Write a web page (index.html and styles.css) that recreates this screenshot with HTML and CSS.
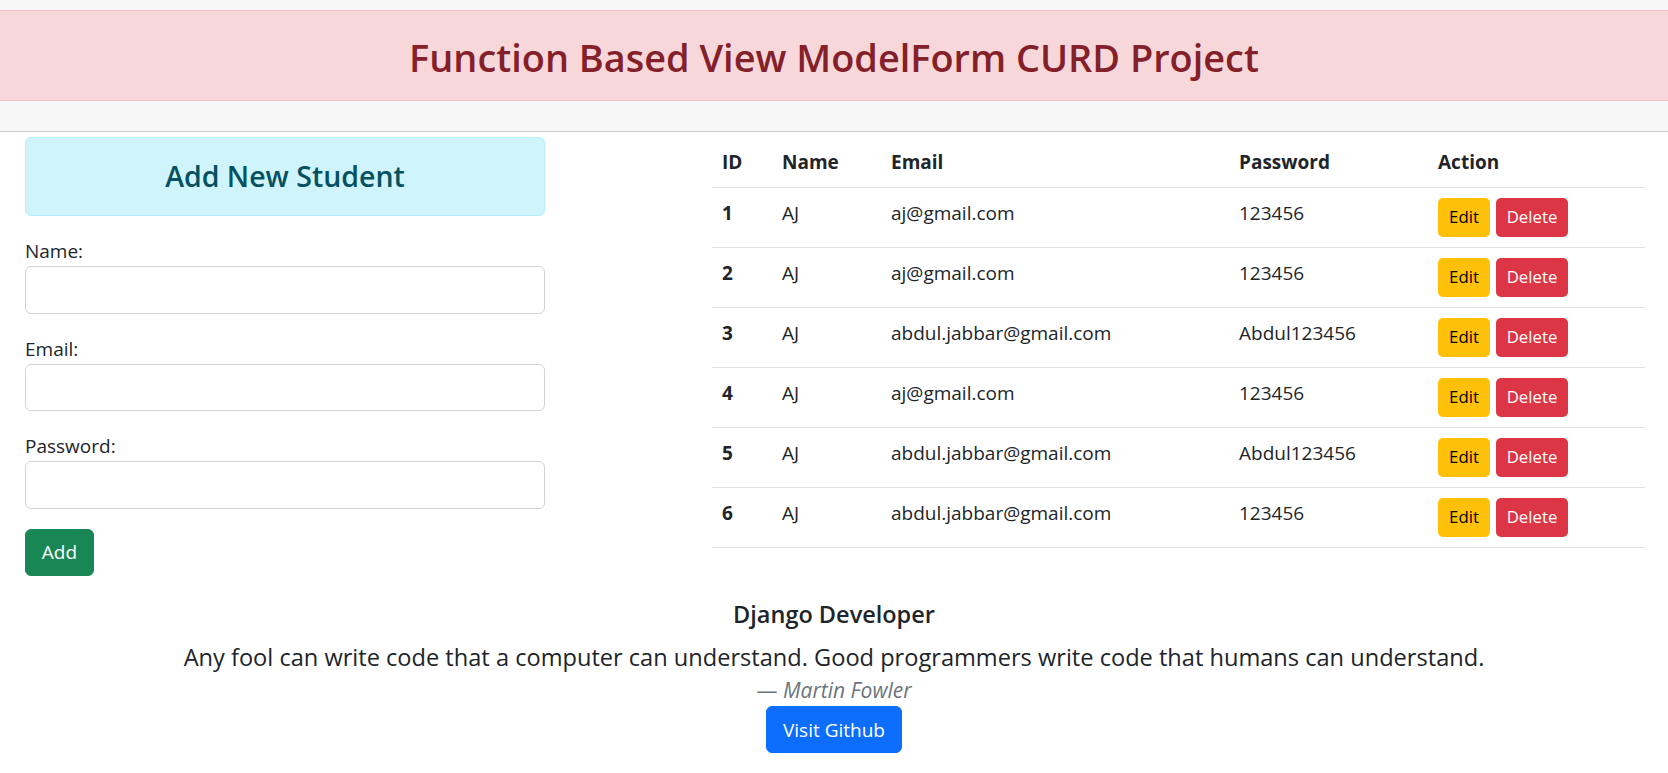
FILE: index.html
```html
<!DOCTYPE html>
<html lang="en">
<head>
<meta charset="utf-8">
<title>Function Based View ModelForm CURD Project</title>
<link rel="stylesheet" href="styles.css">
</head>
<body>
<header class="topbar">
  <div class="alert-danger">
    <h2 class="page-title">Function Based View ModelForm CURD Project</h2>
  </div>
</header>

<main class="content">
  <section class="form-col">
    <div class="alert-info">
      <h4 class="form-title">Add New Student</h4>
    </div>
    <form class="student-form">
      <div class="field">
        <label class="field-label" for="name">Name:</label>
        <input class="field-input" type="text" id="name">
      </div>
      <div class="field">
        <label class="field-label" for="email">Email:</label>
        <input class="field-input" type="email" id="email">
      </div>
      <div class="field">
        <label class="field-label" for="password">Password:</label>
        <input class="field-input" type="password" id="password">
      </div>
      <button type="button" class="btn btn-success">Add</button>
    </form>
  </section>

  <section class="table-col">
    <table class="students">
      <colgroup>
        <col class="c-id"><col class="c-name"><col class="c-email"><col class="c-pass"><col class="c-action">
      </colgroup>
      <thead>
        <tr><th>ID</th><th>Name</th><th>Email</th><th>Password</th><th>Action</th></tr>
      </thead>
      <tbody>
        <tr><th>1</th><td>AJ</td><td>aj@gmail.com</td><td>123456</td><td><div class="actions"><a class="btn-sm btn-warning">Edit</a><a class="btn-sm btn-danger">Delete</a></div></td></tr>
        <tr><th>2</th><td>AJ</td><td>aj@gmail.com</td><td>123456</td><td><div class="actions"><a class="btn-sm btn-warning">Edit</a><a class="btn-sm btn-danger">Delete</a></div></td></tr>
        <tr><th>3</th><td>AJ</td><td>abdul.jabbar@gmail.com</td><td>Abdul123456</td><td><div class="actions"><a class="btn-sm btn-warning">Edit</a><a class="btn-sm btn-danger">Delete</a></div></td></tr>
        <tr><th>4</th><td>AJ</td><td>aj@gmail.com</td><td>123456</td><td><div class="actions"><a class="btn-sm btn-warning">Edit</a><a class="btn-sm btn-danger">Delete</a></div></td></tr>
        <tr><th>5</th><td>AJ</td><td>abdul.jabbar@gmail.com</td><td>Abdul123456</td><td><div class="actions"><a class="btn-sm btn-warning">Edit</a><a class="btn-sm btn-danger">Delete</a></div></td></tr>
        <tr><th>6</th><td>AJ</td><td>abdul.jabbar@gmail.com</td><td>123456</td><td><div class="actions"><a class="btn-sm btn-warning">Edit</a><a class="btn-sm btn-danger">Delete</a></div></td></tr>
      </tbody>
    </table>
  </section>
</main>

<footer class="quote-area">
  <h5 class="quote-heading">Django Developer</h5>
  <blockquote class="quote">Any fool can write code that a computer can understand. Good programmers write code that humans can understand.</blockquote>
  <p class="quote-author"><span class="dash">—</span> <cite>Martin Fowler</cite></p>
  <a class="btn btn-primary">Visit Github</a>
</footer>
</body>
</html>
```
FILE: styles.css
```css
* { box-sizing: border-box; }

body {
  margin: 0;
  font-family: "Open Sans", "Noto Sans", sans-serif;
  font-size: 19px;
  line-height: 30px;
  color: #212529;
  background: #fff;
}

/* ---------- header ---------- */
.topbar {
  background: #f7f7f7;
  padding: 10px 0 30px;
  border-bottom: 1px solid #cccccc;
}
.alert-danger {
  background: #f8d7da;
  border-top: 1px solid #f5c2c7;
  border-bottom: 1px solid #f5c2c7;
  padding: 20px 0;
  color: #842029;
  text-align: center;
}
.page-title {
  margin: 0;
  font-size: 37.9px;
  font-weight: 600;
  line-height: 49px;
  position: relative;
  top: 2px;
}

/* ---------- main ---------- */
.content {
  display: flex;
  align-items: flex-start;
  padding: 5px 23px 0 25px;
  gap: 167px;
}
.form-col { width: 520px; flex: none; }
.table-col { flex: 1; }

.alert-info {
  background: #cff4fc;
  border: 1px solid #b6effb;
  border-radius: 6px;
  padding: 20px 0;
  color: #055160;
  text-align: center;
  margin-bottom: 20px;
}
.form-title {
  margin: 0;
  font-size: 28.5px;
  font-weight: 600;
  line-height: 37px;
}

.student-form { margin: 0; }
.field { margin-bottom: 20px; }
.field-label {
  display: block;
  line-height: 30px;
}
.field-input {
  display: block;
  width: 100%;
  height: 47.5px;
  border: 1px solid #ced4da;
  border-radius: 6px;
  background: #fff;
  font: inherit;
  padding: 0 15px;
}

.btn {
  display: inline-flex;
  align-items: center;
  justify-content: center;
  height: 47.5px;
  padding: 0 15px;
  border-radius: 6px;
  color: #fff;
  font-size: 19px;
  font-family: inherit;
  border: 1px solid transparent;
  text-decoration: none;
  cursor: pointer;
}
.btn-success { background: #198754; border-color: #198754; width: 69px; }
.btn-primary { background: #0d6efd; border-color: #0d6efd; width: 136px; }

/* ---------- table ---------- */
.students {
  width: 100%;
  border-collapse: collapse;
  table-layout: fixed;
}
.c-id { width: 60px; }
.c-name { width: 109px; }
.c-email { width: 348px; }
.c-pass { width: 199px; }
.c-action { width: 217px; }

.students th,
.students td {
  padding: 10px 10px;
  text-align: left;
  vertical-align: top;
  line-height: 30px;
  border-bottom: 1px solid #dee2e6;
  font-weight: 400;
}
.students th { font-weight: 700; }

.actions {
  display: flex;
  gap: 6px;
  height: 39px;
}
.btn-sm {
  display: inline-flex;
  align-items: center;
  justify-content: center;
  height: 39px;
  border-radius: 5px;
  font-size: 16.8px;
  line-height: 1;
  text-decoration: none;
}
.btn-warning { background: #ffc107; color: #000; width: 52px; }
.btn-danger { background: #dc3545; color: #fff; width: 72px; }

/* ---------- footer ---------- */
.quote-area {
  text-align: center;
  margin-top: 23px;
  padding-bottom: 20px;
}
.quote-heading {
  margin: 0 0 10px;
  font-size: 23.5px;
  font-weight: 600;
  line-height: 30px;
}
.quote {
  margin: 0;
  font-size: 23.6px;
  line-height: 37.5px;
}
.quote-author {
  margin: 0 0 3px;
  font-size: 21px;
  line-height: 26.25px;
  color: #6c757d;
}
.quote-author cite { font-style: italic; }
```
